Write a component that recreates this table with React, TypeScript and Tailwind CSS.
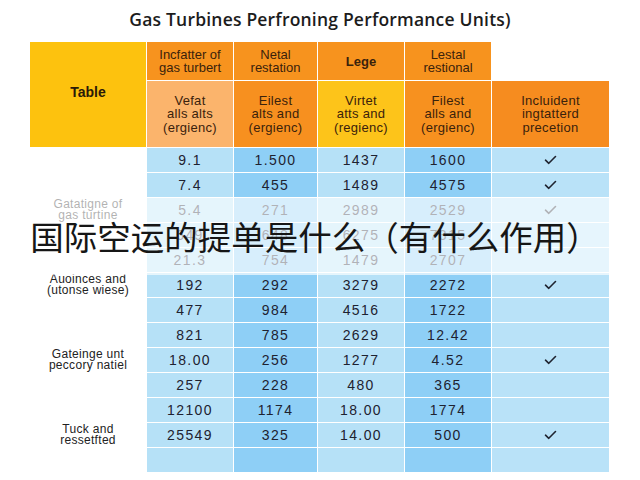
import React from "react";

const colBg = ["bg-[#b6e1f7]", "bg-[#8ecff6]", "bg-[#b6e1f7]", "bg-[#8ecff6]", "bg-[#b9e2f8]"];

const rows: [string, string, string, string, boolean][] = [
  ["9.1", "1.500", "1437", "1600", true],
  ["7.4", "455", "1489", "4575", true],
  ["5.4", "271", "2989", "2529", true],
  ["649", "648", "6275", "7315", false],
  ["21.3", "754", "1479", "2707", false],
  ["192", "292", "3279", "2272", true],
  ["477", "984", "4516", "1722", false],
  ["821", "785", "2629", "12.42", false],
  ["18.00", "256", "1277", "4.52", true],
  ["257", "228", "480", "365", false],
  ["12100", "1174", "18.00", "1774", false],
  ["25549", "325", "14.00", "500", true],
  ["", "", "", "", false],
];

const labels: Record<number, [string, string]> = {
  2: ["Gatatigne of", "gas turtine"],
  5: ["Auoinces and", "(utonse wiese)"],
  8: ["Gateinge unt", "peccory natiel"],
  11: ["Tuck and", "ressetfted"],
};

const topHeads = [
  ["Incfatter of", "gas turbert"],
  ["Netal", "restation"],
  ["Lege"],
  ["Lestal", "restional"],
];

const subHeads: { lines: string[]; bg: string }[] = [
  { lines: ["Vefat", "alls alts", "(ergienc)"], bg: "bg-[#fbb46c]" },
  { lines: ["Eilest", "alts and", "(ergienc)"], bg: "bg-[#f7901f]" },
  { lines: ["Virtet", "atts and", "(regienc)"], bg: "bg-[#fdc41a]" },
  { lines: ["Filest", "alls and", "(ergienc)"], bg: "bg-[#f7911f]" },
  { lines: ["Incluident", "ingtatterd", "precetion"], bg: "bg-[#f68c1f]" },
];

function Tick() {
  return (
    <svg width="13" height="10" viewBox="0 0 13 10" fill="none">
      <path d="M1.5 5.2 L4.8 8.3 L11.5 1.5" stroke="#1f2430" strokeWidth="1.6" strokeLinecap="round" strokeLinejoin="round" />
    </svg>
  );
}

export default function App() {
  return (
    <div className="relative w-[640px] h-[480px] overflow-hidden bg-white font-['Liberation_Sans',Arial,sans-serif]">
      <h1 className="pt-[8px] h-[42px] text-center text-[17.5px] leading-[22px] font-semibold tracking-[0.2px] text-[#1c1c1c] font-['Open_Sans',sans-serif]">
        Gas Turbines Perfroning Performance Units)
      </h1>

      <div className="ml-[30px] grid w-[579px] grid-cols-[116px_86px_83px_86px_86px_117px] grid-rows-[38px_66px_repeat(13,24px)] gap-px bg-white">
        <div className="row-span-2 flex items-center justify-center bg-[#fdc20e] pb-[5px] text-[14px] font-bold text-[#2a1a08]">
          Table
        </div>
        {topHeads.map((h, i) => (
          <div
            key={i}
            className={`flex flex-col items-center justify-center bg-[#f7931e] text-[13px] leading-[13px] text-[#3a220c] ${h.length === 1 ? "font-bold" : ""}`}
          >
            {h.map((l) => (
              <span key={l}>{l}</span>
            ))}
          </div>
        ))}
        <div className="bg-white" />
        {subHeads.map((h, i) => (
          <div key={i} className={`flex flex-col items-center justify-center ${h.bg} text-[13px] leading-[13.5px] tracking-[0.3px] text-[#3a220c]`}>
            {h.lines.map((l) => (
              <span key={l}>{l}</span>
            ))}
          </div>
        ))}

        {rows.map((r, ri) => (
          <React.Fragment key={ri}>
            <div className="flex flex-col items-center justify-center bg-white text-[12px] leading-[11px] tracking-[0.3px] text-[#222]">
              {labels[ri] && (
                <>
                  <span>{labels[ri][0]}</span>
                  <span>{labels[ri][1]}</span>
                </>
              )}
            </div>
            {r.slice(0, 4).map((v, ci) => (
              <div key={ci} className={`flex items-center justify-center ${colBg[ci]} text-[14px] tracking-[1.4px] text-[#1e2230]`}>
                {v as string}
              </div>
            ))}
            <div className={`flex items-center justify-center ${colBg[4]}`}>{r[4] && <Tick />}</div>
          </React.Fragment>
        ))}
      </div>

      <div className="absolute left-0 right-0 top-[197px] flex h-[78px] items-center justify-center bg-white/65">
        <span className="pr-[10px] text-[33.5px] leading-none text-[#161616] font-['Noto_Sans_CJK_SC',sans-serif]">
          国际空运的提单是什么（有什么作用）
        </span>
      </div>
    </div>
  );
}
